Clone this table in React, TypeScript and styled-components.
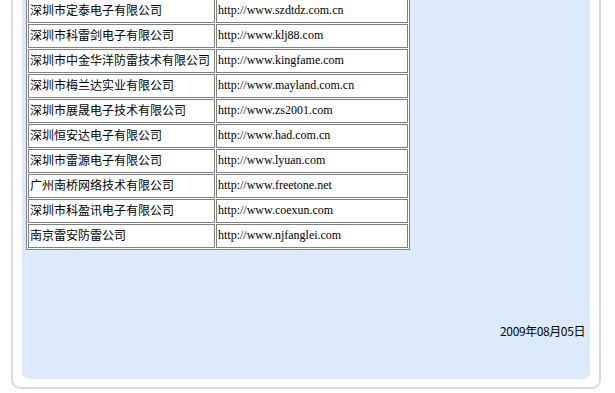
import React from 'react';
import styled, { createGlobalStyle } from 'styled-components';

interface StyledCellProps {
  url?: boolean;
}

interface Company {
  name: string;
  site: string;
}

const companies: Company[] = [
  { name: '深圳市定泰电子有限公司', site: 'http://www.szdtdz.com.cn' },
  { name: '深圳市科雷剑电子有限公司', site: 'http://www.klj88.com' },
  { name: '深圳市中金华洋防雷技术有限公司', site: 'http://www.kingfame.com' },
  { name: '深圳市梅兰达实业有限公司', site: 'http://www.mayland.com.cn' },
  { name: '深圳市展晟电子技术有限公司', site: 'http://www.zs2001.com' },
  { name: '深圳恒安达电子有限公司', site: 'http://www.had.com.cn' },
  { name: '深圳市雷源电子有限公司', site: 'http://www.lyuan.com' },
  { name: '广州南桥网络技术有限公司', site: 'http://www.freetone.net' },
  { name: '深圳市科盈讯电子有限公司', site: 'http://www.coexun.com' },
  { name: '南京雷安防雷公司', site: 'http://www.njfanglei.com' },
];

const GlobalStyle = createGlobalStyle`
  html, body {
    margin: 0;
    padding: 0;
    background: #fff;
  }
  body {
    font-family: "Noto Sans CJK SC", sans-serif;
    color: #000;
    overflow: hidden;
  }
`;

const StyledPage = styled.div`
  width: 615px;
  height: 393px;
  overflow: hidden;
  padding-left: 11px;
  box-sizing: border-box;
`;

const StyledFrame = styled.div`
  width: 590px;
  height: 389px;
  box-sizing: border-box;
  border: 2px solid #dcdcdc;
  border-top: none;
  border-radius: 0 0 9px 9px;
  padding: 0 9px 8px 9px;
`;

const StyledPanel = styled.div`
  height: 100%;
  display: flex;
  flex-direction: column;
  padding: 0 5px 0 4px;
  box-sizing: border-box;
  background: #dcebfc;
  border-radius: 0 0 7px 7px;
`;

const StyledTable = styled.table`
  margin-top: -3px;
  width: 384px;
  table-layout: fixed;
  border-collapse: separate;
  border-spacing: 1px;
  border: 1px solid #808080;
  background: #fff;
`;

const StyledCell = styled.td<StyledCellProps>`
  width: ${({ url }) => (url ? '188px' : '183px')};
  height: 20px;
  padding: 0 1px 2px 1px;
  border: 1px solid #808080;
  vertical-align: middle;
  white-space: nowrap;
  font-family: ${({ url }) => (url ? '"Liberation Serif", serif' : '"Noto Sans CJK SC", sans-serif')};
  font-size: 12px;
  line-height: 20px;
  color: #000;
`;

const StyledDate = styled.div`
  align-self: flex-end;
  margin-top: 73px;
  font-size: 12px;
  line-height: 16px;
  letter-spacing: -0.4px;
  color: #000;
`;

export default function App(): JSX.Element {
  return (
    <StyledPage>
      <GlobalStyle />
      <StyledFrame>
        <StyledPanel>
          <StyledTable>
            <tbody>
              {companies.map((c) => (
                <tr key={c.site}>
                  <StyledCell>{c.name}</StyledCell>
                  <StyledCell url>{c.site}</StyledCell>
                </tr>
              ))}
            </tbody>
          </StyledTable>
          <StyledDate>2009年08月05日</StyledDate>
        </StyledPanel>
      </StyledFrame>
    </StyledPage>
  );
}
